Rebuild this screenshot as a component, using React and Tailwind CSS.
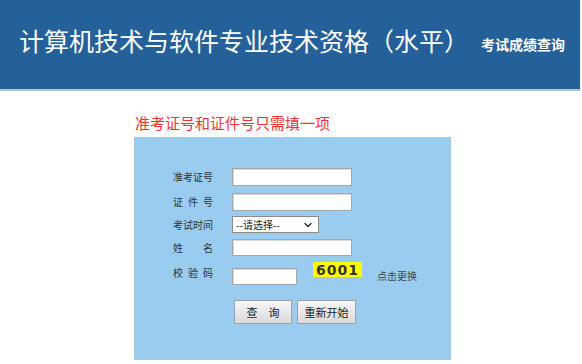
import { ChevronDown } from 'lucide-react';

function Label({ chars }) {
  return (
    <div className="w-[59px] shrink-0">
      <div className="w-[40px] flex justify-between text-[10px] leading-none text-[#333]">
        {chars.map((c) => (
          <span key={c}>{c}</span>
        ))}
      </div>
    </div>
  );
}

function TextBox({ w = 'w-[120px]', h = 'h-[18px]' }) {
  return <div className={`${w} ${h} bg-white border border-[#a7a7a7] shadow-[inset_1px_1px_0_#d8d8d8]`} />;
}

export default function App() {
  return (
    <div className="w-[582px] h-[364px] bg-white overflow-hidden font-['Noto_Sans_CJK_SC',sans-serif]">
      {/* Header */}
      <div className="w-[580px] h-[91px] bg-[#24609a] border-b-2 border-[#a9c4dd]">
        <div className="flex items-center h-[80px] pl-[19px]">
          <h1 className="text-[25px] leading-none text-white">
            计算机技术与软件专业技术资格（水平）
          </h1>
          <span className="mt-[8px] ml-[12px] text-[14px] font-bold leading-none text-white">
            考试成绩查询
          </span>
        </div>
      </div>

      {/* Notice */}
      <p className="mt-[22px] pl-[135px] text-[15px] leading-[20px] text-[#f33333]">
        准考证号和证件号只需填一项
      </p>

      {/* Form panel */}
      <div className="mt-[4px] ml-[134px] w-[317px] h-[223px] bg-[#99ccee] pt-[31px] pl-[39px]">
        <div className="flex items-center h-[18px]">
          <Label chars={['准', '考', '证', '号']} />
          <TextBox />
        </div>
        <div className="flex items-center h-[18px] mt-[7px]">
          <Label chars={['证', '件', '号']} />
          <TextBox />
        </div>
        <div className="flex items-center h-[17px] mt-[5px]">
          <Label chars={['考', '试', '时', '间']} />
          <div className="w-[87px] h-[17px] bg-white border border-[#8a8a8a] flex items-center justify-between pl-[3px] pr-[4px]">
            <span className="text-[10px] leading-none text-[#222]">--请选择--</span>
            <ChevronDown className="w-[12px] h-[12px] text-[#222]" strokeWidth={2.5} />
          </div>
        </div>
        <div className="flex items-center h-[17px] mt-[6px]">
          <Label chars={['姓', '名']} />
          <TextBox h="h-[17px]" />
        </div>
        <div className="flex h-[23px] mt-[6px]">
          <div className="self-center mt-[-2px]">
            <Label chars={['校', '验', '码']} />
          </div>
          <div className="self-end">
            <TextBox w="w-[65px]" h="h-[17px]" />
          </div>
          <div className="ml-[16px] w-[49px] h-[15px] bg-[#ffff00] flex items-center justify-center font-['DejaVu_Sans',sans-serif] text-[14px] font-bold tracking-[1px] text-[#333] leading-none">
            6001
          </div>
          <span className="self-center mt-[4px] ml-[15px] text-[10px] leading-none text-[#444]">点击更换</span>
        </div>
        <div className="flex gap-[5px] mt-[15px] ml-[61px]">
          <button className="w-[58px] h-[24px] border border-[#a0a0a0] bg-gradient-to-b from-[#f7f7f7] to-[#dadada] text-[11px] text-[#222] leading-none">
            查&emsp;询
          </button>
          <button className="w-[59px] h-[24px] border border-[#a0a0a0] bg-gradient-to-b from-[#f7f7f7] to-[#dadada] text-[11px] text-[#222] leading-none">
            重新开始
          </button>
        </div>
      </div>
    </div>
  );
}
